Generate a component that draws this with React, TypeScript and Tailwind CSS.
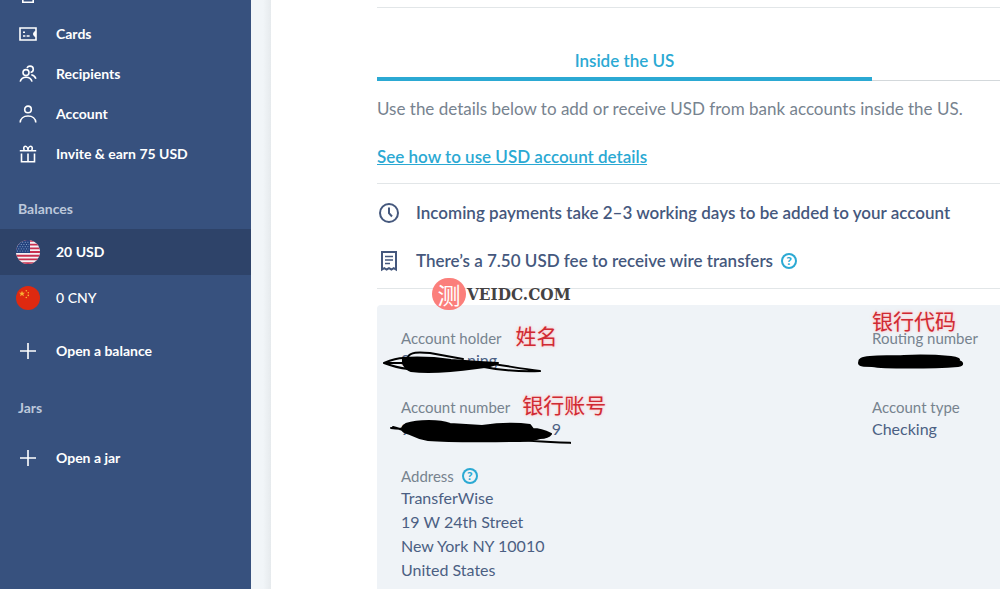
import type { ReactNode } from "react";

const stroke = {
  fill: "none",
  stroke: "currentColor",
  strokeWidth: 1.6,
} as const;

const HomeIcon = () => (
  <svg width="18" height="18" viewBox="0 0 18 18" {...stroke}>
    <path d="M1 8 9 1l8 7M3.8 7v10.2h10.4V7" />
  </svg>
);

const CardIcon = () => (
  <svg width="18" height="18" viewBox="0 0 18 18" {...stroke}>
    <path d="M1 3h16v12H1z" />
    <path d="M4 7.3h2M4 11h2.4M7.6 11h3" strokeWidth="1.5" />
    <path d="M16.6 6.3a2.8 2.8 0 0 0 0 5.4z" fill="currentColor" strokeWidth="1" />
  </svg>
);

const RecipientsIcon = () => (
  <svg width="18" height="18" viewBox="0 0 18 18" {...stroke}>
    <circle cx="7" cy="7.6" r="3" />
    <path d="M1.2 16.6c.7-2.8 3-4.4 5.9-4.4s5.2 1.6 5.9 4.4" />
    <path d="M8 3c.7-1.3 1.8-1.9 3-1.9 1.9 0 3.3 1.4 3.3 3.2 0 1.7-1.1 2.9-2.8 3.2M12.3 9.7c2.3.4 3.8 1.7 4.6 4" />
  </svg>
);

const PersonIcon = () => (
  <svg width="18" height="18" viewBox="0 0 18 18" {...stroke}>
    <circle cx="9" cy="4.4" r="3.3" />
    <path d="M1.2 17.5c.2-4 3.3-6.5 7.8-6.5s7.6 2.5 7.8 6.5" />
  </svg>
);

const GiftIcon = () => (
  <svg width="18" height="18" viewBox="0 0 18 18" {...stroke}>
    <path d="M.8 5.8h16.4M2.5 8.5v8.2h13V8.5M9 8.5v8.2" />
    <path d="M5.2 5.5C4.3 3 4.8 1.3 6.3 1.3S9 3.3 9 5.5c0-2.2 1.2-4.2 2.7-4.2s2 1.7 1.1 4.2" />
  </svg>
);

const PlusIcon = () => (
  <svg width="18" height="18" viewBox="0 0 18 18" {...stroke}>
    <path d="M9 1v16M1 9h16" />
  </svg>
);

const ClockIcon = () => (
  <svg width="22" height="22" viewBox="0 0 22 22" {...stroke} strokeWidth="2">
    <circle cx="11" cy="11" r="9" />
    <path d="M11 5.5v5.7l3 3.3" />
  </svg>
);

const ReceiptIcon = () => (
  <svg width="22" height="22" viewBox="0 0 22 22" {...stroke} strokeWidth="2">
    <path d="M4 2h14v17.5l-2.3-1.3-2.3 1.3-2.4-1.3-2.4 1.3-2.3-1.3L4 19.5z" />
    <path d="M7 6.5h8M7 10h8M7 13.5h5" strokeWidth="1.6" />
  </svg>
);

const UsFlag = () => (
  <svg width="24" height="24" viewBox="0 0 24 24">
    <clipPath id="us">
      <circle cx="12" cy="12" r="12" />
    </clipPath>
    <g clipPath="url(#us)">
      <path fill="#f5f1f4" d="M0 0h24v24H0z" />
      <path
        stroke="#c8304f"
        strokeWidth="1.85"
        d="M0 .9h24M0 4.6h24M0 8.3h24M0 12h24M0 15.7h24M0 19.4h24M0 23.1h24"
      />
      <path fill="#24437e" d="M0 0h14v12.9H0z" />
      <path
        stroke="#8fa8cf"
        strokeWidth=".9"
        strokeDasharray="1 1.6"
        d="M1 2.3h12.5M2.2 4.5h11M1 6.7h12.5M2.2 8.9h11M1 11.1h12.5"
      />
    </g>
  </svg>
);

const CnFlag = () => (
  <svg width="24" height="24" viewBox="0 0 24 24">
    <circle cx="12" cy="12" r="12" fill="#de2910" />
    <g fill="#f9b233">
      <path d="m6 4.8.8 2h2.2L7.3 8.1l.6 2.1L6 8.9l-1.9 1.3.6-2.1L3 6.8h2.2z" />
      <circle cx="10.3" cy="4.8" r=".8" />
      <circle cx="12.3" cy="6.8" r=".8" />
      <circle cx="12.3" cy="9.4" r=".8" />
      <circle cx="10.3" cy="11.5" r=".8" />
    </g>
  </svg>
);

const HelpButton = ({ label }: { label: string }) => (
  <button
    type="button"
    aria-label={label}
    className="flex size-4 items-center justify-center rounded-full text-xs font-black leading-none text-[#2ba9d3] ring-2 ring-inset ring-[#2ba9d3]"
  >
    ?
  </button>
);

type NavItemProps = {
  icon: ReactNode;
  label?: string;
  className?: string;
};

const NavItem = ({ icon, label, className = "h-10 font-bold" }: NavItemProps) => (
  <a
    href="#"
    aria-label={label ?? "Home"}
    className={`flex items-center gap-4 pl-4 text-sm text-white ${className}`}
  >
    <span className="flex w-6 justify-center">{icon}</span>
    {label}
  </a>
);

const NavHeading = ({ children }: { children: ReactNode }) => (
  <h2 className="px-[18px] text-sm font-bold leading-5 text-[#bdc8db]">{children}</h2>
);

const Sidebar = () => (
  <aside className="w-[251px] shrink-0 overflow-hidden bg-[#37517e]">
    {/* page is scrolled, so the first item is cut by the top edge */}
    <nav className="-mt-[26px]">
      <NavItem icon={<HomeIcon />} />
      <NavItem icon={<CardIcon />} label="Cards" />
      <NavItem icon={<RecipientsIcon />} label="Recipients" />
      <NavItem icon={<PersonIcon />} label="Account" />
      <NavItem icon={<GiftIcon />} label="Invite & earn 75 USD" />

      <div className="pt-[25px] pb-[10px]">
        <NavHeading>Balances</NavHeading>
      </div>
      <NavItem icon={<UsFlag />} label="20 USD" className="h-[46px] bg-[#2e4369] font-bold" />
      <NavItem icon={<CnFlag />} label="0 CNY" className="h-[46px] font-medium" />
      <NavItem icon={<PlusIcon />} label="Open a balance" className="h-[60px] font-bold" />

      <div className="pt-[17px] pb-[10px]">
        <NavHeading>Jars</NavHeading>
      </div>
      <NavItem icon={<PlusIcon />} label="Open a jar" className="h-[60px] font-bold" />
    </nav>
  </aside>
);

const Note = ({ children, className }: { children: ReactNode; className: string }) => (
  <span
    className={`font-['Noto_Sans_CJK_SC',sans-serif] text-[21px] leading-5 text-[#cf2a33] [text-shadow:0_0_2px_#ffb9b9,0_0_4px_#ffd2d2] ${className}`}
  >
    {children}
  </span>
);

type DetailProps = {
  label: string;
  extra?: ReactNode;
  children: ReactNode;
};

const Detail = ({ label, extra, children }: DetailProps) => (
  <div className="relative">
    <dt className="flex h-[21px] items-center text-[15px] leading-5 text-[#77838f]">
      {label}
      {extra}
    </dt>
    <dd className="min-h-6 text-base leading-6 text-[#4b5f83]">{children}</dd>
  </div>
);

const Scribble = ({ children }: { children: ReactNode }) => (
  <svg
    width="190"
    height="28"
    viewBox="0 0 190 28"
    fill="none"
    stroke="#000"
    strokeWidth="2"
    strokeLinecap="round"
    strokeLinejoin="round"
    className="absolute -left-5 top-6"
  >
    {children}
  </svg>
);

const Watermark = () => (
  <div className="absolute left-[55px] top-[278px] flex items-center gap-px">
    <span className="flex h-8 w-[34px] items-center justify-center rounded-full bg-[#fb7f7b] font-['Noto_Sans_CJK_SC',sans-serif] text-[23px] leading-none text-white">
      测
    </span>
    <span className="font-['DejaVu_Serif_Condensed','DejaVu_Serif',serif] text-[17px] font-bold leading-8 text-[#454243]">
      VEIDC.COM
    </span>
  </div>
);

const AccountDetails = () => (
  <dl className="grid grid-cols-2 gap-y-6 rounded-t-sm bg-[#eff3f7] px-6 pt-[22px] pb-6">
    <Detail label="Account holder" extra={<Note className="mb-1.5 ml-3.5">姓名</Note>}>
      <span className="flex w-24 justify-between">
        <span>S</span>
        <span>ning</span>
      </span>
      <Scribble>
        <path
          fill="#000"
          d="M22 7c17-1 34 0 48 2l28 2 19 1c-4 3-12 4-21 5-22 3-50 5-66 3-6-2-9-8-8-13z"
        />
        <path d="M3 12c7-3 14-5 20-5M3 12c8 3 15 5 24 6M3 12h25M27 6c2-5 10-5 22-4l33 6M88 11c18 0 40 5 71 9-22 1-42-1-62-5" />
      </Scribble>
    </Detail>
    <Detail label="Routing number">
      <Note className="absolute -top-[17px] left-0">银行代码</Note>
      <Scribble>
        <path
          fill="#000"
          d="M9 8c8-4 25-2 43-3 20-1 36 0 47 1 6 1 10 2 7 4 5 1 6 4 0 5-26 2-75 2-86 0-8 0-13 0-13-3 0-2 0-3 2-4z"
        />
      </Scribble>
    </Detail>
    <Detail label="Account number" extra={<Note className="mb-1.5 ml-3">银行账号</Note>}>
      <span className="flex w-40 justify-between">
        <span>9</span>
        <span>9</span>
      </span>
      <Scribble>
        <path
          fill="#000"
          d="M25 4c12-4 34-4 44 0l32 2c14-2 34-3 48-1l3 4c6 0 12 2 18 5-2 3-6 4-11 4-8 3-14 3-20 3-32 0-65 1-92-1-10-2-14-4-18-6-12-3-8-7-4-10z"
        />
        <path d="M10 8c6 1 12 1 20 0M12 7c6 2 14 4 22 6M120 18c20 3 48 4 73 5" />
      </Scribble>
    </Detail>
    <Detail label="Account type">Checking</Detail>
    <Detail
      label="Address"
      extra={
        <span className="ml-2">
          <HelpButton label="About the address" />
        </span>
      }
    >
      TransferWise
      <br />
      19 W 24th Street
      <br />
      New York NY 10010
      <br />
      United States
    </Detail>
  </dl>
);

export default function App() {
  return (
    <div className="flex h-screen overflow-hidden bg-white font-['Lato',sans-serif]">
      <Sidebar />
      <div className="w-5 shrink-0 bg-linear-to-r from-[#f1f5f8] from-60% to-[#e6eaed]" />

      <main className="min-w-0 flex-1 overflow-hidden pl-[106px]">
        <div className="relative w-[990px]">
          <div className="h-2 border-b border-[#e2e6e8]" />

          <div role="tablist" className="mt-[33px] flex border-b border-[#d3d8db]">
            <button
              type="button"
              role="tab"
              aria-selected="true"
              className="-mb-px h-10 w-1/2 border-b-4 border-[#2ba9d3] pt-1 text-[17px] font-semibold text-[#2ba9d3]"
            >
              Inside the US
            </button>
          </div>

          <p className="mt-4 text-[17px] leading-6 text-[#77838f]">
            Use the details below to add or receive USD from bank accounts inside the US.
          </p>
          <a
            href="#"
            className="mt-6 inline-block text-[17px] font-semibold leading-6 text-[#2ba9d3] underline"
          >
            See how to use USD account details
          </a>

          <ul className="mt-[14px] border-y border-[#e2e6e8] pt-[17px] pb-[15px] text-[17px] font-semibold leading-6 text-[#45587d]">
            <li className="flex items-center gap-4 pl-px">
              <ClockIcon />
              Incoming payments take 2–3 working days to be added to your account
            </li>
            <li className="mt-6 flex items-center gap-4 pl-px">
              <ReceiptIcon />
              <span className="flex items-center gap-2">
                There’s a 7.50 USD fee to receive wire transfers
                <HelpButton label="About the wire transfer fee" />
              </span>
            </li>
          </ul>

          <div className="mt-4">
            <AccountDetails />
          </div>
          <Watermark />
        </div>
      </main>
    </div>
  );
}
